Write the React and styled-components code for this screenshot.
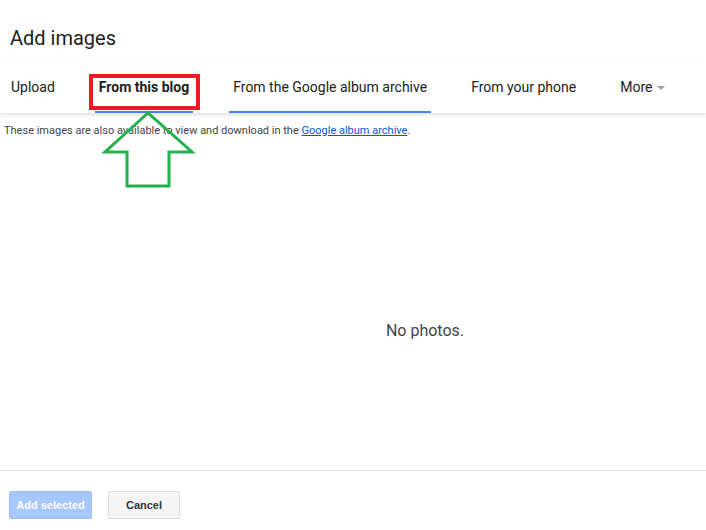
import React from 'react';
import styled, { createGlobalStyle } from 'styled-components';

const GlobalStyle = createGlobalStyle`
    html, body {
        margin: 0;
        padding: 0;
        background: #fff;
    }
    body {
        font-family: Roboto, "Liberation Sans", Arial, sans-serif;
    }
`

const Dialog = styled.div`
    position: relative;
    width: 706px;
    height: 530px;
    display: flex;
    flex-direction: column;
    overflow: hidden;
`

const Title = styled.h1`
    margin: 28px 0 0 10px;
    font-size: 20px;
    line-height: 20px;
    font-weight: 400;
    color: #212121;
`

const TabBar = styled.div`
    margin-top: 16px;
    display: flex;
    gap: 36px;
    padding-left: 7px;
    box-shadow: 0 2px 4px rgba(0, 0, 0, 0.12);
    position: relative;
    z-index: 1;
`

const Tab = styled.div`
    height: 47px;
    padding: 0 4px 1px;
    box-sizing: border-box;
    display: flex;
    align-items: center;
    font-size: 14px;
    font-weight: ${({ active }) => (active ? 700 : 400)};
    color: #212121;
    border-bottom: 2px solid ${({ underline }) => (underline ? '#4285f4' : 'transparent')};
    cursor: pointer;
    white-space: nowrap;
    height: 49px;
`

const Caret = styled.span`
    display: inline-block;
    margin-left: 5px;
    margin-top: 1px;
    border-left: 4px solid transparent;
    border-right: 4px solid transparent;
    border-top: 4px solid #9e9e9e;
`

const Info = styled.p`
    margin: 11px 0 0 4px;
    font-size: 11px;
    line-height: 14px;
    color: #444;

    a {
        color: #15c;
        text-decoration: underline;
    }
`

const Empty = styled.div`
    flex: 1;
    padding: 183px 0 0 144px;
    text-align: center;
    font-size: 16px;
    line-height: 20px;
    color: #444;
`

const Footer = styled.div`
    border-top: 1px solid #e5e5e5;
    padding: 20px 0 11px 9px;
    display: flex;
    gap: 16px;
`

const Button = styled.button`
    width: ${({ w }) => w}px;
    height: 28px;
    padding: 0;
    border-radius: 2px;
    font-family: Arial, "Liberation Sans", sans-serif;
    font-size: 11px;
    font-weight: 700;
    border: 1px solid ${({ primary }) => (primary ? '#9dbff7' : '#dcdcdc')};
    background: ${({ primary }) => (primary ? '#a6c8ff' : '#f5f5f5')};
    color: ${({ primary }) => (primary ? '#fff' : '#333')};
    box-sizing: border-box;
`

const RedBox = styled.div`
    position: absolute;
    left: 89px;
    top: 74px;
    width: 111px;
    height: 36px;
    box-sizing: border-box;
    border: 4px solid #ed1c24;
    z-index: 3;
    pointer-events: none;
`

const Arrow = styled.svg`
    position: absolute;
    left: 0;
    top: 0;
    z-index: 3;
    pointer-events: none;
`

const tabs = [
    { label: 'Upload' },
    { label: 'From this blog', active: true, underline: true },
    { label: 'From the Google album archive', underline: true },
    { label: 'From your phone' },
]

export default function App() {
    return (
        <Dialog>
            <GlobalStyle />
            <Title>Add images</Title>
            <TabBar>
                {tabs.map(t => (
                    <Tab key={t.label} active={t.active} underline={t.underline}>
                        {t.label}
                    </Tab>
                ))}
                <Tab>
                    More<Caret />
                </Tab>
            </TabBar>
            <Info>
                These images are also available to view and download in the <a href="#">Google album archive</a>.
            </Info>
            <Empty>No photos.</Empty>
            <Footer>
                <Button primary w={83}>Add selected</Button>
                <Button w={72}>Cancel</Button>
            </Footer>

            {/* annotation */}
            <RedBox />
            <Arrow width="706" height="530" viewBox="0 0 706 530">
                <polygon
                    points="148,113 105,152 127,152 127,186 169,186 169,152 192,152"
                    fill="none"
                    stroke="#22b14c"
                    strokeWidth="3"
                    strokeLinejoin="miter"
                />
            </Arrow>
        </Dialog>
    )
}
